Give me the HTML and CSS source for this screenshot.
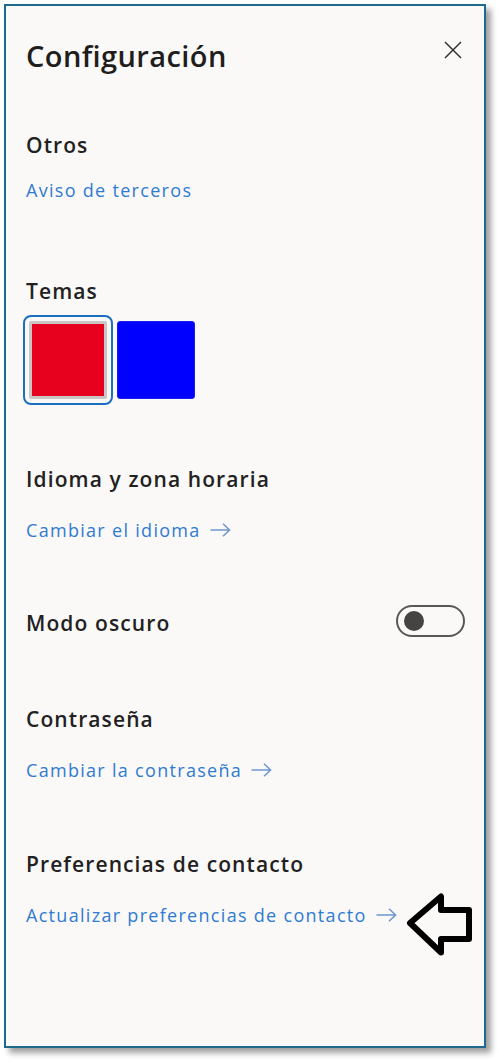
FILE: index.html
```html
<!DOCTYPE html>
<html lang="es">
<head>
<meta charset="utf-8">
<title>Configuración</title>
<link rel="stylesheet" href="styles.css">
</head>
<body>
<div class="panel">
  <header class="panel-header">
    <h1 class="title">Configuración</h1>
    <button class="close" aria-label="Cerrar">
      <svg width="18" height="18" viewBox="0 0 18 18"><path d="M1 1 L17 17 M17 1 L1 17" stroke="#323130" stroke-width="1.5" fill="none"/></svg>
    </button>
  </header>

  <section class="section sec-otros">
    <h2 class="heading">Otros</h2>
    <a class="link link-tight" href="#">Aviso de terceros</a>
  </section>

  <section class="section sec-temas">
    <h2 class="heading">Temas</h2>
    <div class="swatches">
      <button class="swatch swatch-red selected" aria-label="Rojo"></button>
      <button class="swatch swatch-blue" aria-label="Azul"></button>
    </div>
  </section>

  <section class="section sec-idioma">
    <h2 class="heading">Idioma y zona horaria</h2>
    <a class="link" href="#">Cambiar el idioma
      <svg class="arrow" width="21" height="14" viewBox="0 0 21 14"><path d="M0.5 7 H19.5 M13 0.8 L19.6 7 L13 13.2" stroke="#6e96cf" stroke-width="1.5" fill="none"/></svg>
    </a>
  </section>

  <section class="section sec-modo">
    <div class="toggle-row">
      <h2 class="heading heading-row">Modo oscuro</h2>
      <button class="toggle" aria-label="Modo oscuro"><span class="knob"></span></button>
    </div>
  </section>

  <section class="section sec-pass">
    <h2 class="heading">Contraseña</h2>
    <a class="link" href="#">Cambiar la contraseña
      <svg class="arrow" width="21" height="14" viewBox="0 0 21 14"><path d="M0.5 7 H19.5 M13 0.8 L19.6 7 L13 13.2" stroke="#6e96cf" stroke-width="1.5" fill="none"/></svg>
    </a>
  </section>

  <section class="section sec-pref">
    <h2 class="heading">Preferencias de contacto</h2>
    <a class="link" href="#">Actualizar preferencias de contacto
      <svg class="arrow" width="21" height="14" viewBox="0 0 21 14"><path d="M0.5 7 H19.5 M13 0.8 L19.6 7 L13 13.2" stroke="#6e96cf" stroke-width="1.5" fill="none"/></svg>
    </a>
  </section>
</div>

<svg class="annotation" width="74" height="70" viewBox="0 0 74 70">
  <path d="M6 32 L37 5.5 L37 19 L65 19 L65 48 L37 48 L37 61.5 Z" fill="none" stroke="#000" stroke-width="6" stroke-linejoin="round"/>
</svg>
</body>
</html>
```

FILE: styles.css
```css
* {
  box-sizing: border-box;
}

html, body {
  margin: 0;
  padding: 0;
  background: #ffffff;
}

body {
  position: relative;
  width: 498px;
  height: 1060px;
  font-family: "Open Sans", "Noto Sans", sans-serif;
  color: #201f1e;
}

.panel {
  margin: 4px 0 0 4px;
  width: 482px;
  height: 1044px;
  border: 2px solid #1d6a8d;
  background: #faf9f8;
  box-shadow: 5px 5px 6px rgba(0, 0, 0, 0.38);
  padding: 32px 22px 0 20px;
  display: flex;
  flex-direction: column;
}

.panel-header {
  display: flex;
  justify-content: space-between;
  align-items: flex-start;
}

.title {
  margin: 0;
  font-size: 29px;
  line-height: 36px;
  letter-spacing: 0.4px;
  font-weight: 600;
  color: #1f1e1d;
}

.close {
  margin-top: 3px;
  padding: 0;
  border: 0;
  background: none;
  width: 18px;
  height: 18px;
  display: block;
}

.close svg {
  display: block;
}

.section {
  display: flex;
  flex-direction: column;
  align-items: flex-start;
}

.heading {
  margin: 0;
  font-size: 21px;
  line-height: 28px;
  letter-spacing: 1.1px;
  font-weight: 600;
  color: #22211f;
}

.link {
  margin-top: 25px;
  display: flex;
  align-items: center;
  gap: 9px;
  font-size: 18px;
  line-height: 24px;
  letter-spacing: 1.3px;
  color: #2f7bd1;
  text-decoration: none;
}

.link-tight {
  margin-top: 19px;
}

.arrow {
  display: block;
}

.sec-otros { margin-top: 57px; }
.sec-temas { margin-top: 75px; }
.sec-idioma { margin-top: 66px; }
.sec-modo { margin-top: 63px; align-items: stretch; }
.sec-pass { margin-top: 68px; }
.sec-pref { margin-top: 68px; }

.swatches {
  margin-top: 16px;
  margin-left: 3px;
  display: flex;
  gap: 10px;
}

.swatch {
  width: 78px;
  height: 78px;
  padding: 0;
  border-radius: 3px;
  display: block;
}

.swatch-red {
  background: #e8001f;
  border: 3px solid #c9c6c4;
  border-radius: 2px;
}

.swatch-blue {
  background: #0000ff;
  border: 1px solid #1a1af0;
}

.selected {
  outline: 2px solid #1c6fc0;
  outline-offset: 4px;
  border-radius: 2px;
}

.toggle-row {
  display: flex;
  justify-content: space-between;
  align-items: center;
}

.heading-row {
  margin-top: 4px;
}

.toggle {
  margin-right: -3px;
  width: 69px;
  height: 32px;
  border: 2px solid #5a5856;
  border-radius: 16px;
  background: #faf9f8;
  padding: 0 0 0 6px;
  display: flex;
  align-items: center;
}

.knob {
  width: 20px;
  height: 20px;
  border-radius: 50%;
  background: #464442;
  display: block;
}

.annotation {
  position: absolute;
  left: 404px;
  top: 891px;
}
```
